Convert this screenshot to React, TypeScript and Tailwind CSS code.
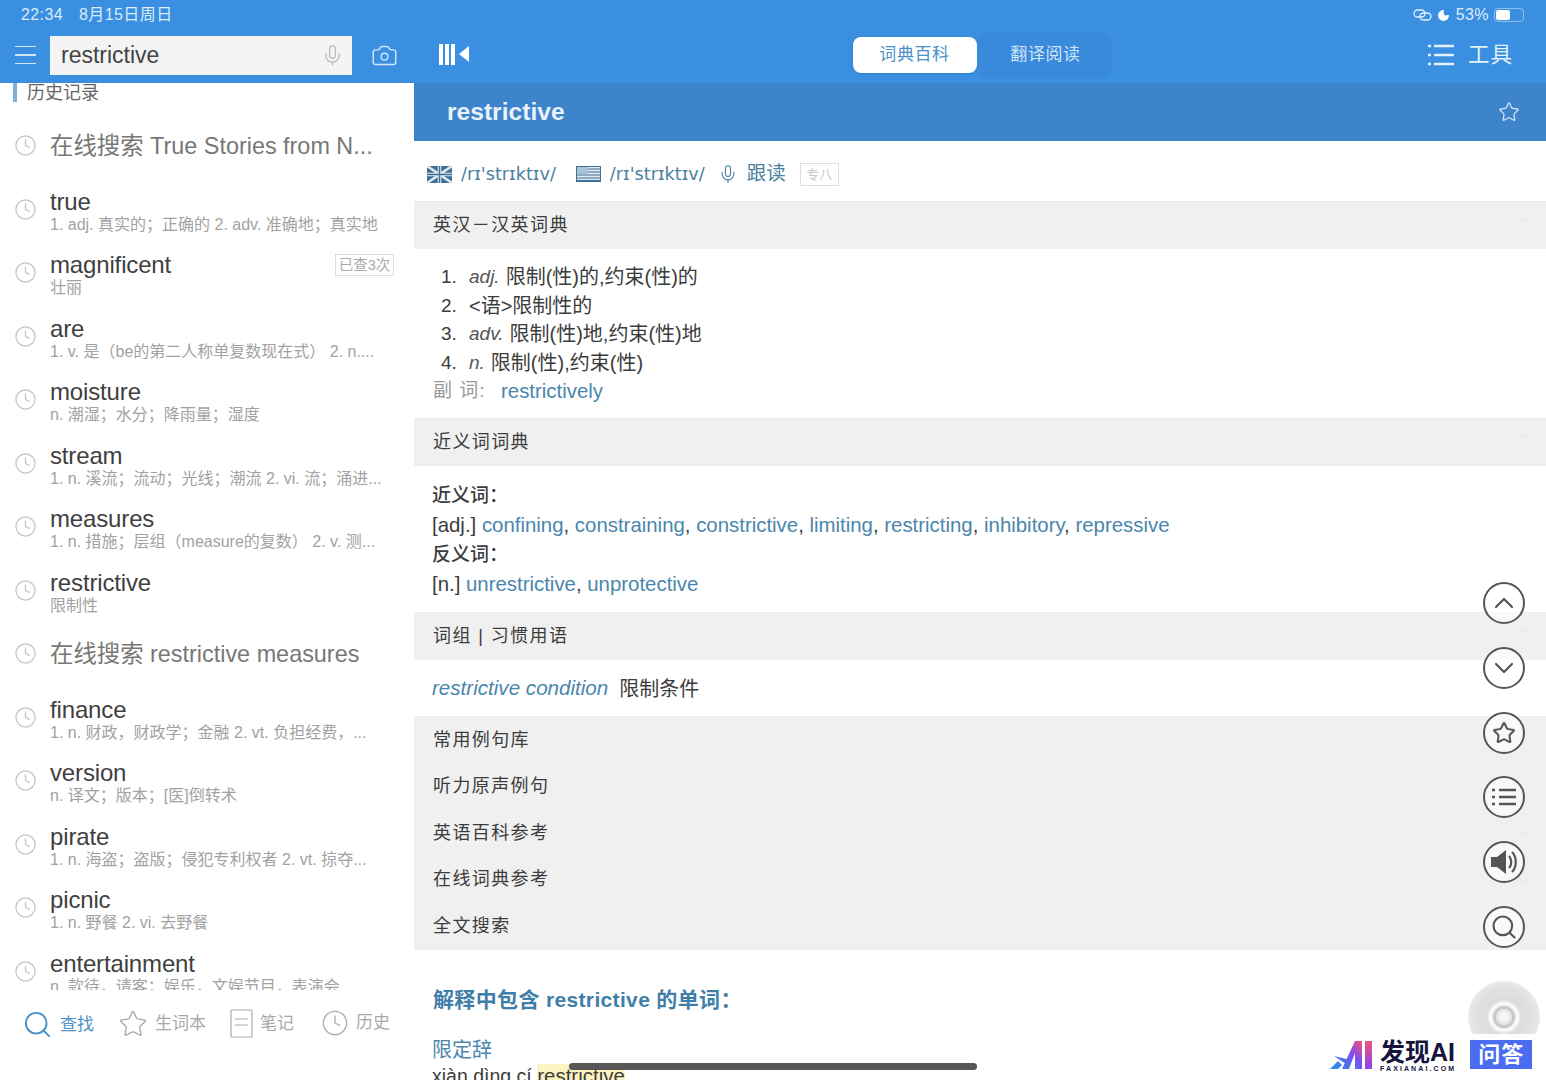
import { Camera, ChevronDown, ChevronUp, Clock, Mic, Moon, Search, Star } from 'lucide-react';

const history = [
  { online: '在线搜索 True Stories from N...' },
  { word: 'true', desc: '1. adj. 真实的；正确的 2. adv. 准确地；真实地' },
  { word: 'magnificent', desc: '壮丽', badge: '已查3次' },
  { word: 'are', desc: '1. v. 是（be的第二人称单复数现在式） 2. n....' },
  { word: 'moisture', desc: 'n. 潮湿；水分；降雨量；湿度' },
  { word: 'stream', desc: '1. n. 溪流；流动；光线；潮流 2. vi. 流；涌进...' },
  { word: 'measures', desc: '1. n. 措施；层组（measure的复数） 2. v. 测...' },
  { word: 'restrictive', desc: '限制性' },
  { online: '在线搜索 restrictive measures' },
  { word: 'finance', desc: '1. n. 财政，财政学；金融 2. vt. 负担经费，...' },
  { word: 'version', desc: 'n. 译文；版本；[医]倒转术' },
  { word: 'pirate', desc: '1. n. 海盗；盗版；侵犯专利权者 2. vt. 掠夺...' },
  { word: 'picnic', desc: '1. n. 野餐 2. vi. 去野餐' },
  { word: 'entertainment', desc: 'n. 款待，请客；娱乐，文娱节目，表演会' },
];

const defs = [
  { pos: 'adj.', text: '限制(性)的,约束(性)的' },
  { pos: '', text: '<语>限制性的' },
  { pos: 'adv.', text: '限制(性)地,约束(性)地' },
  { pos: 'n.', text: '限制(性),约束(性)' },
];

const collapsed = [
  { title: '常用例句库', h: 'h-[47px]' },
  { title: '听力原声例句', h: 'h-[46px]' },
  { title: '英语百科参考', h: 'h-[47px]' },
  { title: '在线词典参考', h: 'h-[46px]' },
  { title: '全文搜索', h: 'h-[48px]' },
];

const SectionHead = ({ title, h = 'h-12', open }: { title: string; h?: string; open?: boolean }) => (
  <div className={`${h} bg-[#f0f0f0] border-t border-[#ededed] flex items-center justify-between pl-[19px] pr-[12px] text-[18px] tracking-[1.4px] text-[#3c3c3c]`}>
    <span>{title}</span>
    {open ? <ChevronUp className="w-5 h-5 -mt-3 text-[#e2e2e2]" strokeWidth={1.2} /> : <ChevronDown className="w-5 h-5 text-[#e4e4e4]" strokeWidth={1.2} />}
  </div>
);

const UkFlag = () => (
  <svg width="25" height="17" viewBox="0 0 25 17">
    <rect width="25" height="17" fill="#3f6f94" />
    <path d="M0 0L25 17M25 0L0 17" stroke="#dfe9f0" strokeWidth="2.6" />
    <path d="M12.5 0V17M0 8.5H25" stroke="#dfe9f0" strokeWidth="3.6" />
    <path d="M12.5 0V17M0 8.5H25" stroke="#3f6f94" strokeWidth="1.4" />
  </svg>
);

const UsFlag = () => (
  <svg width="25" height="16" viewBox="0 0 25 16">
    <rect x="0.5" y="0.5" width="24" height="15" fill="#dfe9f0" stroke="#3f6f94" />
    <path d="M1 3H24M1 6H24M1 9H24M1 12H24M1 14.5H24" stroke="#3f6f94" strokeWidth="1.2" />
    <rect x="1" y="1" width="11" height="7" fill="#a8c2d6" />
  </svg>
);

const RoundBtn = ({ children, className }: { children: React.ReactNode; className: string }) => (
  <div className={`absolute left-[1483px] w-[42px] h-[42px] rounded-full border-[2.5px] border-[#555] bg-white/60 flex items-center justify-center text-[#555] ${className}`}>
    {children}
  </div>
);

const Tab = ({ icon, label, active, className = '' }: { icon: React.ReactNode; label: string; active?: boolean; className?: string }) => (
  <div className={`flex items-center gap-[7px] text-[17px] ${active ? 'text-[#4c93c9]' : 'text-[#a9a9a9]'} ${className}`}>
    {icon}
    <span>{label}</span>
  </div>
);

export default function App() {
  return (
    <div className="relative w-[1546px] h-[1080px] overflow-hidden bg-white flex flex-col font-['Liberation_Sans','Noto_Sans_CJK_SC',sans-serif]">
      {/* top blue bar */}
      <div className="h-[83px] shrink-0 bg-[#3a8fe1] text-white">
        <div className="h-[30px] flex items-center justify-between pl-[21px] pr-[22px] text-[16px] tracking-[0.4px] text-[#d9ecfb]">
          <div className="flex gap-[16px]">
            <span>22:34</span>
            <span>8月15日周日</span>
          </div>
          <div className="flex items-center gap-[5px]">
            <svg width="19" height="12" viewBox="0 0 19 12" fill="none" stroke="#e4f1fc" strokeWidth="1.3">
              <rect x="1" y="1" width="11" height="7" rx="3.5" />
              <rect x="7" y="4" width="11" height="7" rx="3.5" />
            </svg>
            <Moon className="w-[13px] h-[13px] fill-white text-white" />
            <span className="ml-[1px]">53%</span>
            <div className="w-[30px] h-[14px] rounded-[4px] border border-[#8fc1ee] p-[1px]">
              <div className="w-[14px] h-full rounded-[2px] bg-white" />
            </div>
          </div>
        </div>
        <div className="h-[50px] flex items-center">
          <div className="w-[50px] pl-[15px] flex flex-col gap-[7px]">
            <div className="w-[21px] h-[1.5px] bg-[#cfe5f8]" />
            <div className="w-[21px] h-[1.5px] bg-[#cfe5f8]" />
            <div className="w-[21px] h-[1.5px] bg-[#cfe5f8]" />
          </div>
          <div className="w-[302px] h-[39px] bg-[#f4f4f4] flex items-center justify-between pl-[11px] pr-[8px] text-[23px] text-[#444]">
            <span>restrictive</span>
            <Mic className="w-[23px] h-[25px] text-[#b5b5b5]" strokeWidth={1.2} />
          </div>
          <Camera className="w-[27px] h-[27px] ml-[19px] text-[#cfe5f8]" strokeWidth={1.3} />
          <div className="ml-[41px] -mt-[2px] flex items-center gap-[3px]">
            <div className="flex gap-[2.5px]">
              <div className="w-[3.5px] h-[21px] bg-white" />
              <div className="w-[3.5px] h-[21px] bg-white" />
              <div className="w-[3.5px] h-[21px] bg-white" />
            </div>
            <svg width="12" height="18" viewBox="0 0 12 18"><path d="M11 1V17L1 9Z" fill="#fff" /></svg>
          </div>
          <div className="ml-[383px] flex items-center">
            <div className="w-[124px] h-[36px] rounded-[8px] bg-white shadow-sm flex items-center justify-center text-[17px] text-[#4a8fc7] tracking-[0.6px]">词典百科</div>
            <div className="w-[134px] h-[45px] pl-[4px] rounded-[8px] bg-[#3a8adc] flex items-center justify-center text-[17px] text-[#cfe5f8] tracking-[0.6px]">翻译阅读</div>
          </div>
          <div className="ml-auto pr-[33px] flex items-center gap-[14px] text-[21.5px] text-[#e4f1fc] tracking-[1px]">
            <svg width="26" height="22" viewBox="0 0 26 22" fill="none" stroke="#e4f1fc" strokeWidth="2.4">
              <path d="M6 2H26M6 11H26M6 20H26M0 2H3M0 11H3M0 20H3" />
            </svg>
            <span>工具</span>
          </div>
        </div>
      </div>

      <div className="flex-1 min-h-0 flex">
        {/* history column */}
        <div className="w-[414px] shrink-0 flex flex-col">
          <div className="h-[907px] overflow-hidden">
            <div className="h-[31.5px] pl-[13px] flex items-start gap-[10px] text-[18px] leading-[20px] text-[#666]">
              <div className="w-1 h-[19px] bg-[#7fb0d8]" />
              <span>历史记录</span>
            </div>
            {history.map((item, i) => (
              <div key={i} className="h-[63.5px] flex items-center pl-[14px] pr-[20px] border-b border-[#fcfcfc]">
                <Clock className="w-[23px] h-[23px] shrink-0 text-[#c4c4c4]" strokeWidth={1.3} />
                {item.online ? (
                  <div className="ml-[13px] pt-[2px] text-[23.4px] text-[#777] whitespace-nowrap">{item.online}</div>
                ) : (
                  <div className="ml-[13px] pt-[3px] flex-1 min-w-0">
                    <div className="flex items-start justify-between">
                      <div className="text-[24px] tracking-[-0.15px] leading-[27px] text-[#3f3f3f]">{item.word}</div>
                      {item.badge && (
                        <div className="mt-[3px] -mb-[2px] h-[22px] w-[59px] text-center border border-[#ddd] text-[14.5px] leading-[20px] text-[#aaa]">{item.badge}</div>
                      )}
                    </div>
                    <div className="text-[16px] leading-[19px] text-[#a2a2a2] whitespace-nowrap">{item.desc}</div>
                  </div>
                )}
              </div>
            ))}
          </div>
          <div className="flex-1 bg-white relative pt-[19px] pl-[22px] flex gap-[24px] items-start">
            <Tab
              active
              label="查找"
              icon={<Search className="w-[31px] h-[31px]" strokeWidth={1.5} />}
            />
            <Tab label="生词本" icon={<Star className="w-[30px] h-[30px]" strokeWidth={1.1} />} />
            <Tab
              label="笔记"
              icon={
                <svg width="23" height="29" viewBox="0 0 23 29" fill="none" stroke="#a9a9a9" strokeWidth="1.2">
                  <rect x="1" y="1" width="21" height="27" rx="1" />
                  <path d="M5 10H18M5 16H18" />
                </svg>
              }
            />
            <Tab className="ml-[3px]" label="历史" icon={<Clock className="w-[28px] h-[28px]" strokeWidth={1.1} />} />
          </div>
        </div>

        {/* detail column */}
        <div className="flex-1 min-w-0 overflow-hidden">
          <div className="h-[58px] bg-[#3e84cb] flex items-center justify-between pl-[33px] pr-[26px] text-white">
            <span className="text-[24.6px] font-bold text-[#e8f2fb]">restrictive</span>
            <Star className="w-[22px] h-[22px] text-[#d8eafa]" strokeWidth={1.3} />
          </div>
          <div className="h-[60px] flex items-center pt-[6px] pl-[13px] text-[20px] text-[#4a7f9f]">
            <UkFlag />
            <span className="ml-[9px] font-['DejaVu_Sans','Liberation_Sans',sans-serif] text-[17.7px]">/rɪ'strɪktɪv/</span>
            <span className="ml-[20px]"><UsFlag /></span>
            <span className="ml-[9px] font-['DejaVu_Sans','Liberation_Sans',sans-serif] text-[17.7px]">/rɪ'strɪktɪv/</span>
            <Mic className="ml-[13px] w-[20px] h-[20px]" strokeWidth={1.3} />
            <span className="ml-[9px] text-[19.5px]">跟读</span>
            <span className="ml-[14px] w-[39px] h-[23px] border border-[#ddd] text-[13px] leading-[21px] text-center text-[#c8c8c8]">专八</span>
          </div>

          <SectionHead title="英汉－汉英词典" open />
          <div className="h-[169px] pl-[27px] pt-[14px] text-[20px] leading-[28.5px] text-[#3c3c3c]">
            {defs.map((d, i) => (
              <div key={i} className="flex">
                <span className="w-[28px] text-[19px]">{i + 1}.</span>
                {d.pos && <i className="mr-[6px] text-[#555] text-[19px]">{d.pos}</i>}
                <span>{d.text}</span>
              </div>
            ))}
            <div className="flex -ml-[8px]">
              <span className="w-[68px] text-[19px] text-[#999] tracking-[1px]">副 词:</span>
              <span className="text-[20.4px] text-[#4a86ad]">restrictively</span>
            </div>
          </div>

          <SectionHead title="近义词词典" open />
          <div className="h-[146px] pl-[18px] pt-[15px] text-[20.4px] leading-[29.6px] text-[#3c3c3c]">
            <div className="text-[19px] font-medium">近义词：</div>
            <div>
              [adj.]{' '}
              <span className="text-[#4a86ad]">confining</span>, <span className="text-[#4a86ad]">constraining</span>, <span className="text-[#4a86ad]">constrictive</span>, <span className="text-[#4a86ad]">limiting</span>, <span className="text-[#4a86ad]">restricting</span>, <span className="text-[#4a86ad]">inhibitory</span>, <span className="text-[#4a86ad]">repressive</span>
            </div>
            <div className="text-[19px] font-medium">反义词：</div>
            <div>
              [n.] <span className="text-[#4a86ad]">unrestrictive</span>, <span className="text-[#4a86ad]">unprotective</span>
            </div>
          </div>

          <SectionHead title="词组 | 习惯用语" open />
          <div className="h-[56px] pt-[1px] pl-[18px] flex items-center text-[20px] text-[#3c3c3c]">
            <i className="text-[20.6px] text-[#4a86ad] mr-[11px]">restrictive condition</i>
            <span>限制条件</span>
          </div>

          {collapsed.map((c) => (
            <SectionHead key={c.title} title={c.title} h={c.h} />
          ))}

          <div className="pl-[19px] pt-[34px] text-[21px] font-bold text-[#3f7ea8] tracking-[0.35px]">解释中包含 restrictive 的单词：</div>
          <div className="pl-[18px] mt-[21px] text-[20px] leading-[26px] text-[#4a86ad]">限定辞</div>
          <div className="pl-[18px] text-[19.5px] leading-[26px] text-[#3c3c3c]">
            xiàn dìng cí <span className="text-[20.5px] bg-[#fbf3c0]">restrictive</span>
          </div>
        </div>
      </div>

      {/* floating buttons */}
      <RoundBtn className="top-[582px]"><ChevronUp className="w-8 h-8" strokeWidth={1.6} /></RoundBtn>
      <RoundBtn className="top-[647px]"><ChevronDown className="w-8 h-8" strokeWidth={1.6} /></RoundBtn>
      <RoundBtn className="top-[712px]"><Star className="w-6 h-6" strokeWidth={2} /></RoundBtn>
      <RoundBtn className="top-[776px]">
        <svg width="26" height="20" viewBox="0 0 26 20" fill="none" stroke="#555" strokeWidth="2.6">
          <path d="M8 3H25M8 10H25M8 17H25M1 3H4M1 10H4M1 17H4" />
        </svg>
      </RoundBtn>
      <RoundBtn className="top-[841px]">
        <svg width="30" height="28" viewBox="0 0 30 28">
          <path d="M2 9H8L17 2V26L8 19H2Z" fill="#555" />
          <path d="M20 8C23 11 23 17 20 20M23 4C28 9 28 19 23 24" fill="none" stroke="#555" strokeWidth="2.2" />
        </svg>
      </RoundBtn>
      <RoundBtn className="top-[906px]"><Search className="w-7 h-7" strokeWidth={1.8} /></RoundBtn>

      {/* assistive touch */}
      <div className="absolute left-[1468px] top-[981px] w-[72px] h-[72px] rounded-full bg-[radial-gradient(circle,#e8e8e8_0%,#e8e8e8_22%,#fff_26%,#dcdcdc_34%,#e2e2e2_60%,#f2f2f2_80%,#fbfbfb_100%)] flex items-center justify-center">
        <div className="w-[22px] h-[22px] rounded-full border-[3px] border-[#c8c8c8] flex items-center justify-center">
          <div className="w-[10px] h-[10px] rounded-full bg-[#f4f4f4]" />
        </div>
      </div>

      {/* home indicator */}
      <div className="absolute left-[569px] top-[1063px] w-[408px] h-[7px] rounded-full bg-[#565656]" />

      {/* watermark */}
      <div className="absolute left-[1322px] top-[1034px] w-[224px] h-[46px] bg-white flex items-start pt-[6px] pl-[8px]">
        <svg width="42" height="30" viewBox="0 0 42 30">
          <defs>
            <linearGradient id="wmA" x1="0" y1="1" x2="1" y2="0">
              <stop offset="0" stopColor="#1d9bf0" />
              <stop offset="0.6" stopColor="#7b4df0" />
              <stop offset="1" stopColor="#f0567a" />
            </linearGradient>
            <linearGradient id="wmI" x1="0" y1="0" x2="0" y2="1">
              <stop offset="0" stopColor="#f0567a" />
              <stop offset="1" stopColor="#8a45f0" />
            </linearGradient>
          </defs>
          <path d="M0 29L8 21L12 25L8 29ZM4 16L20 20L16 24ZM12 29L25 1H32V29H25V13L19 29Z" fill="url(#wmA)" />
          <rect x="35" y="1" width="7" height="28" fill="url(#wmI)" />
        </svg>
        <div className="ml-[8px] flex flex-col">
          <span className="text-[25px] leading-[24px] font-bold text-[#14143c] whitespace-nowrap">发现AI</span>
          <span className="text-[7px] leading-[9px] font-bold tracking-[2.1px] text-[#14143c] whitespace-nowrap">FAXIANAI.COM</span>
        </div>
        <div className="ml-[14px] w-[62px] h-[29px] bg-[#4a6cf0] text-white text-[22px] leading-[29px] font-bold text-center tracking-[1px]">问答</div>
      </div>
    </div>
  );
}
